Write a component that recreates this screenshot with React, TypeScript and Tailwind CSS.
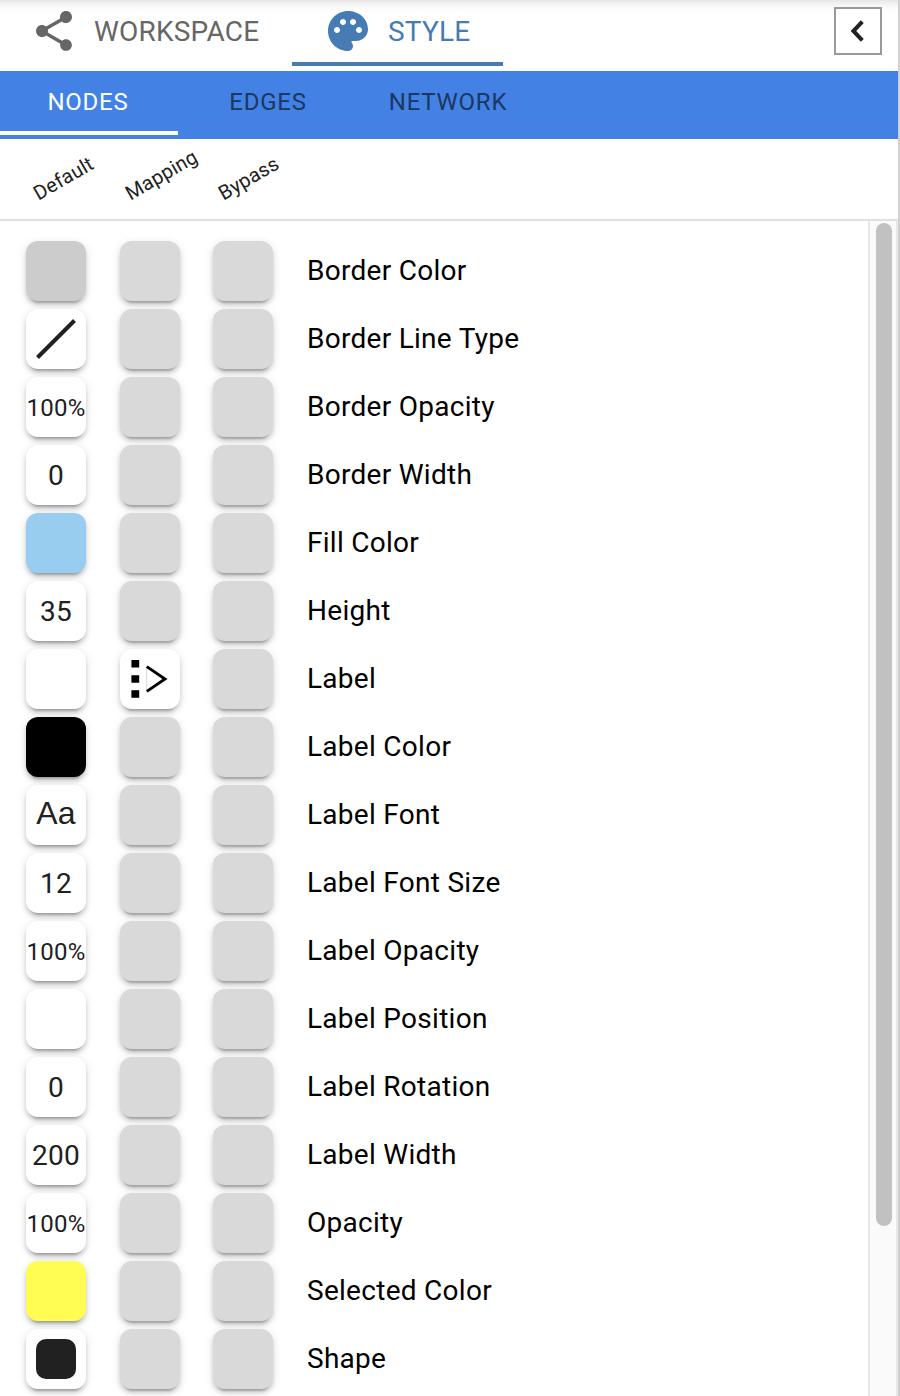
import type { ReactNode } from "react";

const tile =
  "flex h-[60px] w-[60px] shrink-0 items-center justify-center rounded-[12px] whitespace-nowrap text-[#212121] shadow-[0_6px_2px_-4px_rgba(0,0,0,0.2),0_4px_4px_0_rgba(0,0,0,0.14),0_2px_10px_0_rgba(0,0,0,0.12)]";

function Swatch({ color }: { color: string }) {
  return <div className={tile} style={{ backgroundColor: color }} />;
}

function ValueTile({ children }: { children?: ReactNode }) {
  return <div className={`${tile} bg-white`}>{children}</div>;
}

function NumberTile({ value }: { value: string }) {
  return (
    <ValueTile>
      <span className="pt-0.5 text-[28px] leading-[40px] tracking-[0.26px]">{value}</span>
    </ValueTile>
  );
}

function PercentTile() {
  return (
    <ValueTile>
      <span className="pt-0.5 text-[24px] leading-[40px] tracking-[0.2px]">100%</span>
    </ValueTile>
  );
}

function PassthroughIcon() {
  return (
    <svg width="60" height="60" viewBox="0 0 60 60" fill="none">
      <path d="M11.4 11h7.8v7.6h-7.8zM11.4 26.2h7.8v7.6h-7.8zM11.4 41.2h7.8v7.6h-7.8z" fill="#000" />
      <path d="M26.6 17v26" stroke="#ccc" strokeWidth="0.7" />
      <path d="M26.8 17.6L45 30 26.8 42.4" stroke="#000" strokeWidth="2.9" />
    </svg>
  );
}

const rows: { label: string; value: ReactNode; mapping?: ReactNode }[] = [
  { label: "Border Color", value: <Swatch color="#cccccc" /> },
  {
    label: "Border Line Type",
    value: (
      <ValueTile>
        <svg width="60" height="60" viewBox="0 0 60 60">
          <path d="M11.5 48.5L48.5 11.5" stroke="#212121" strokeWidth="4" />
        </svg>
      </ValueTile>
    ),
  },
  { label: "Border Opacity", value: <PercentTile /> },
  { label: "Border Width", value: <NumberTile value="0" /> },
  { label: "Fill Color", value: <Swatch color="#98cdf0" /> },
  { label: "Height", value: <NumberTile value="35" /> },
  { label: "Label", value: <ValueTile />, mapping: <PassthroughIcon /> },
  { label: "Label Color", value: <Swatch color="#000000" /> },
  {
    label: "Label Font",
    value: (
      <ValueTile>
        <span className="pb-1 font-['Liberation_Sans',sans-serif] text-[32px] leading-[40px] tracking-[0.3px]">Aa</span>
      </ValueTile>
    ),
  },
  { label: "Label Font Size", value: <NumberTile value="12" /> },
  { label: "Label Opacity", value: <PercentTile /> },
  { label: "Label Position", value: <ValueTile /> },
  { label: "Label Rotation", value: <NumberTile value="0" /> },
  { label: "Label Width", value: <NumberTile value="200" /> },
  { label: "Opacity", value: <PercentTile /> },
  { label: "Selected Color", value: <Swatch color="#fffd54" /> },
  {
    label: "Shape",
    value: (
      <ValueTile>
        <div className="h-10 w-10 rounded-[10px] bg-[#212121]" />
      </ValueTile>
    ),
  },
];

function ShareIcon() {
  return (
    <svg width="48" height="48" viewBox="0 0 24 24" fill="currentColor">
      <path d="M18 16.08c-.76 0-1.44.3-1.96.77L8.91 12.7c.05-.23.09-.46.09-.7s-.04-.47-.09-.7l7.05-4.11c.54.5 1.25.81 2.04.81 1.66 0 3-1.34 3-3s-1.34-3-3-3-3 1.34-3 3c0 .24.04.47.09.7L8.04 9.81C7.5 9.31 6.79 9 6 9c-1.66 0-3 1.34-3 3s1.34 3 3 3c.79 0 1.5-.31 2.04-.81l7.12 4.16c-.05.21-.08.43-.08.65 0 1.61 1.31 2.92 2.92 2.92s2.92-1.31 2.92-2.92-1.31-2.92-2.92-2.92z" />
    </svg>
  );
}

function PaletteIcon() {
  return (
    <svg width="48" height="48" viewBox="0 0 24 24" fill="currentColor">
      <path d="M12 2C6.49 2 2 6.49 2 12s4.49 10 10 10c1.38 0 2.5-1.12 2.5-2.5 0-.61-.23-1.2-.64-1.67-.08-.1-.13-.21-.13-.33 0-.28.22-.5.5-.5H16c3.31 0 6-2.69 6-6 0-4.96-4.49-9-10-9zm5.5 11c-.83 0-1.5-.67-1.5-1.5s.67-1.5 1.5-1.5 1.5.67 1.5 1.5-.67 1.5-1.5 1.5zm-3-4c-.83 0-1.5-.67-1.5-1.5S13.67 6 14.5 6s1.5.67 1.5 1.5S15.33 9 14.5 9zM5 11.5c0-.83.67-1.5 1.5-1.5s1.5.67 1.5 1.5S7.33 13 6.5 13 5 12.33 5 11.5zm6-4c0 .83-.67 1.5-1.5 1.5S8 8.33 8 7.5 8.67 6 9.5 6s1.5.67 1.5 1.5z" />
    </svg>
  );
}

export default function App() {
  return (
    <div className="flex h-[1396px] w-[900px] flex-col overflow-hidden border-r-2 border-[#d0d0d0] bg-white font-[Roboto,sans-serif] text-black">
      <header className="flex h-[71px] shrink-0 justify-between bg-[linear-gradient(to_bottom,#e6e6e6_0px,#f3f3f3_4px,#fbfbfb_8px,#ffffff_13px)]">
        <nav className="flex h-[66px] text-[28px] leading-[50px] tracking-[0.2px]">
          <div className="flex w-[292px] items-start pt-[7px] pl-[30px] text-[#666666]">
            <ShareIcon />
            <span className="ml-4">WORKSPACE</span>
          </div>
          <div className="flex w-[211px] items-start border-b-4 border-[#467bb4] pt-[7px] pl-8 text-[#467bb4]">
            <PaletteIcon />
            <span className="ml-4">STYLE</span>
          </div>
        </nav>
        <button className="mt-[7px] mr-4 flex h-12 w-12 items-center justify-center border-2 border-[#999999] bg-white">
          <svg width="44" height="44" viewBox="0 0 44 44" fill="none" stroke="#212121" strokeWidth="4">
            <path d="M26.3 12.6L17.4 22l8.9 9.4" />
          </svg>
        </button>
      </header>

      <nav className="flex h-[68px] shrink-0 bg-[#4381e4] text-center text-[24px] leading-[62px] tracking-[0.76px] text-[#1c3761]">
        <div className="mb-1 w-[178px] border-b-4 border-white pr-0.5 text-white">NODES</div>
        <div className="w-[180px]">EDGES</div>
        <div className="w-[180px]">NETWORK</div>
      </nav>

      <div className="flex h-[82px] shrink-0 border-b-2 border-[#e0e0e0] pt-[42px] pl-[41px] text-[20px] leading-[24px] tracking-[0.2px] text-[#212121]">
        <div className="w-[92px]">
          <span className="inline-block origin-bottom-left -rotate-30">Default</span>
        </div>
        <div className="w-[93px]">
          <span className="inline-block origin-bottom-left -rotate-30">Mapping</span>
        </div>
        <div>
          <span className="inline-block origin-bottom-left -rotate-30">Bypass</span>
        </div>
      </div>

      <main className="flex min-h-0 flex-1">
        <div className="flex flex-1 flex-col gap-2 overflow-hidden pt-5 pl-[26px]">
          {rows.map((row) => (
            <div key={row.label} className="flex h-[60px] shrink-0 items-center">
              {row.value}
              <div className={`${tile} ml-[34px] ${row.mapping ? "bg-white" : "bg-[#d9d9d9]"}`}>{row.mapping}</div>
              <div className={`${tile} ml-[33px] bg-[#d9d9d9]`} />
              <span className="ml-[34px] text-[28px] leading-[40px] tracking-[0.28px]">{row.label}</span>
            </div>
          ))}
        </div>
        <div className="w-[30px] border-x-2 border-[#e8e8e8] bg-[#fafafa] pt-0.5 pl-1.5">
          <div className="h-[1003px] w-4 rounded-full bg-[#c1c1c1]" />
        </div>
      </main>
    </div>
  );
}
